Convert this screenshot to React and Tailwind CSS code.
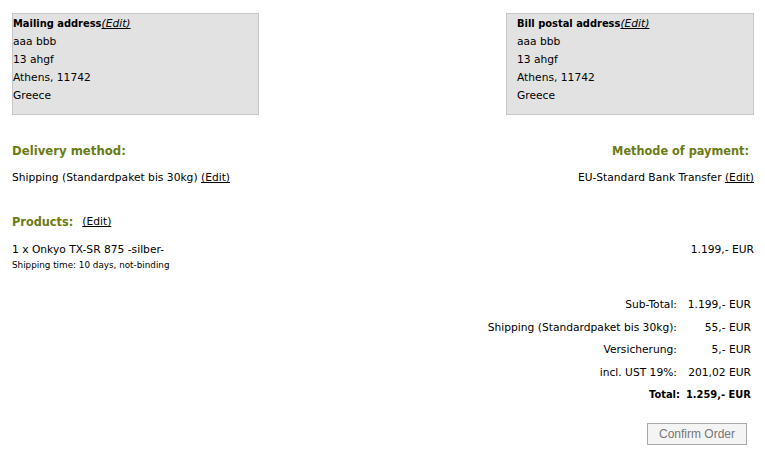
const condensed = { fontFamily: '"DejaVu Sans Condensed", "DejaVu Sans", sans-serif' };

function AddressBox({ title, className }) {
  return (
    <div className={`w-[247px] h-[102px] bg-[#e1e2e1] border border-[#c8c8c8] pt-px ${className}`}>
      <div>
        <b className="text-[11px]" style={condensed}>{title}</b>
        <a className="italic underline">(Edit)</a>
      </div>
      <div>aaa bbb</div>
      <div>13 ahgf</div>
      <div>Athens, 11742</div>
      <div>Greece</div>
    </div>
  );
}

export default function App() {
  const totals = [
    ["Sub-Total:", "1.199,- EUR"],
    ["Shipping (Standardpaket bis 30kg):", "55,- EUR"],
    ["Versicherung:", "5,- EUR"],
    ["incl. UST 19%:", "201,02 EUR"],
  ];

  return (
    <div
      className="w-[765px] h-[456px] bg-white text-black text-[10.7px] leading-[18px]"
      style={{ fontFamily: '"DejaVu Sans", Verdana, sans-serif' }}
    >
      <div className="pl-[12px] pr-[11px] pt-[13px]">
        {/* addresses */}
        <div className="flex justify-between">
          <AddressBox title="Mailing address" className="pl-0" />
          <AddressBox title="Bill postal address" className="pl-[10px] w-[248px]" />
        </div>

        {/* delivery / payment */}
        <div className="flex justify-between mt-[26px]">
          <div>
            <div className="text-[#6b7b14] font-bold text-[13px] leading-[20px]" style={condensed}>
              Delivery method:
            </div>
            <div className="mt-[8px]">
              Shipping (Standardpaket bis 30kg) <a className="underline">(Edit)</a>
            </div>
          </div>
          <div className="text-right">
            <div className="text-[#6b7b14] font-bold text-[12.6px] leading-[20px] pr-[5px]" style={condensed}>
              Methode of payment:
            </div>
            <div className="mt-[8px]">
              EU-Standard Bank Transfer <a className="underline">(Edit)</a>
            </div>
          </div>
        </div>

        {/* products */}
        <div className="mt-[25px] flex items-center gap-[9px]">
          <span className="text-[#6b7b14] font-bold text-[12.6px] leading-[20px]" style={condensed}>
            Products:
          </span>
          <a className="underline">(Edit)</a>
        </div>
        <div className="mt-[9px] flex justify-between">
          <div>
            <div>1 x Onkyo TX-SR 875 -silber-</div>
            <div className="text-[8.8px] leading-[12px]">Shipping time: 10 days, not-binding</div>
          </div>
          <div>1.199,- EUR</div>
        </div>

        {/* totals */}
        <div className="mt-[23px] flex justify-end pr-[3px]">
          <table className="border-separate border-spacing-0">
            <tbody>
              {totals.map(([label, value]) => (
                <tr key={label} className="h-[22.5px]">
                  <td className="text-right pr-[9px]">{label}</td>
                  <td className="text-right">{value}</td>
                </tr>
              ))}
              <tr className="h-[22.5px] font-bold text-[11px]" style={condensed}>
                <td className="text-right pr-[6px]">Total:</td>
                <td className="text-right">1.259,- EUR</td>
              </tr>
            </tbody>
          </table>
        </div>

        <div className="mt-[16px] flex justify-end pr-[7px]">
          <button
            className="w-[100px] h-[22px] border border-[#a9a9a9] bg-[#f4f4f4] text-[#777] text-[12px] leading-none"
            style={{ fontFamily: '"Liberation Sans", Arial, sans-serif' }}
          >
            Confirm Order
          </button>
        </div>
      </div>
    </div>
  );
}
